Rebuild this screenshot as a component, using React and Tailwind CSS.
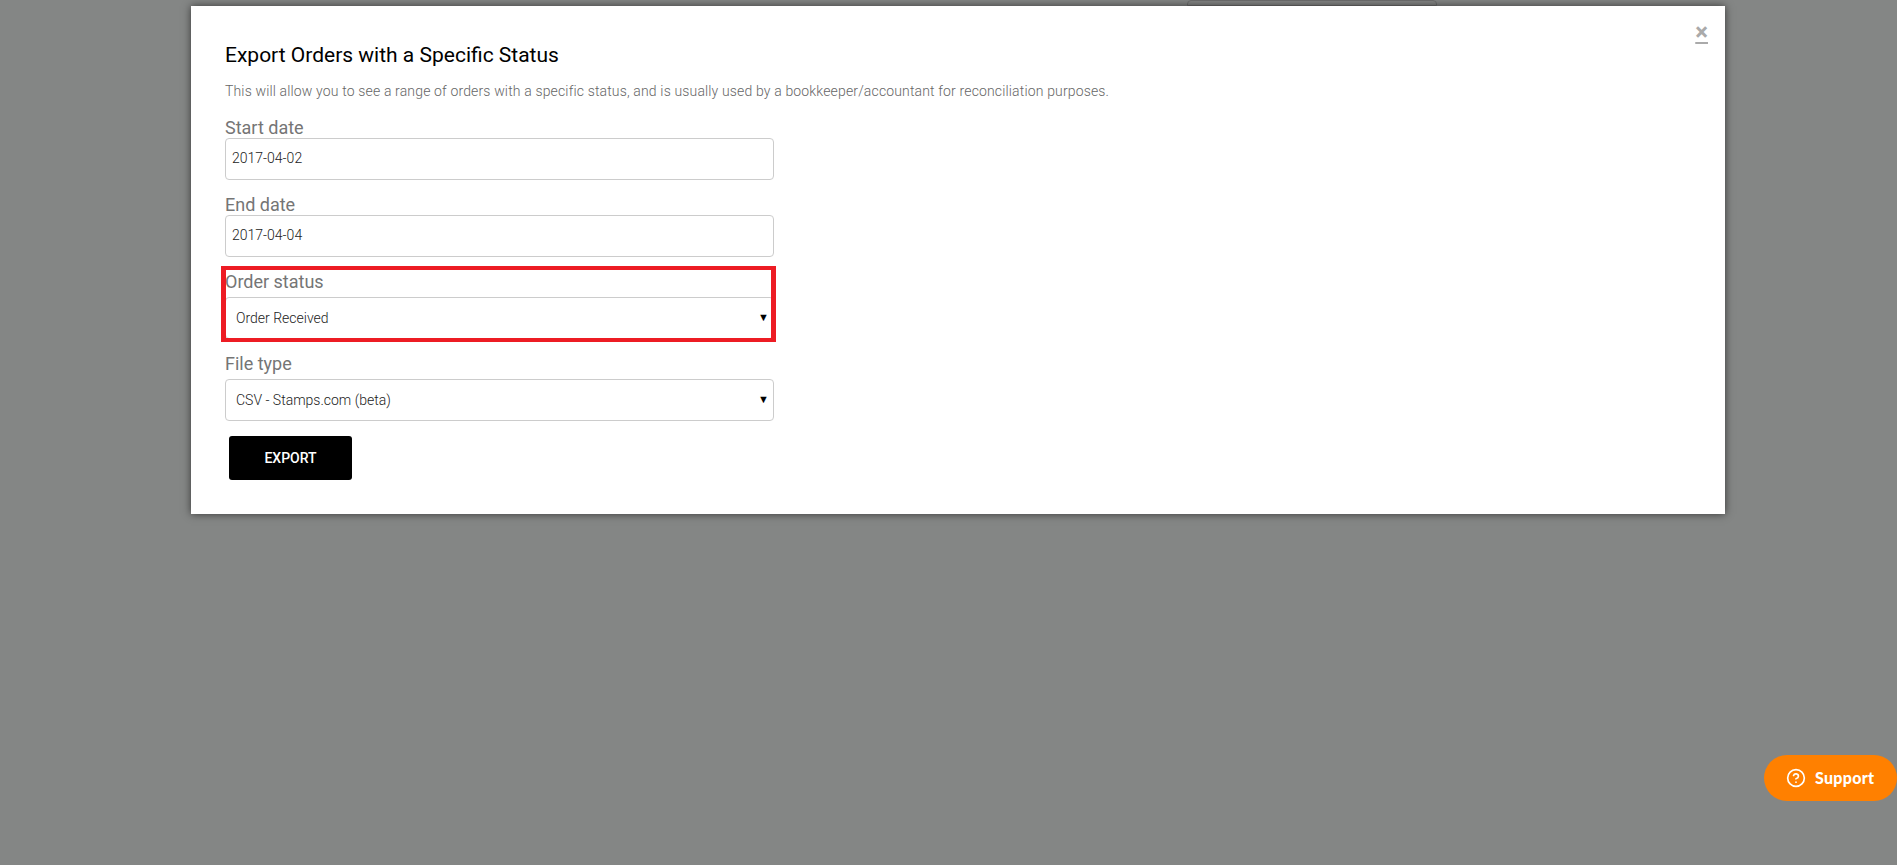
import React from 'react';
import { CircleHelp } from 'lucide-react';

function Field({ label, children, className = '', labelClass = '' }) {
  return (
    <div className={className}>
      <label className={`block text-[18px] leading-[21px] text-[#757575] ${labelClass}`}>{label}</label>
      {children}
    </div>
  );
}

function TextBox({ value }) {
  return (
    <div className="h-[42px] w-[549px] rounded-[4px] border border-[#ccc] bg-white pl-[6px] text-[14px] font-light leading-[38px] text-[#222]">
      {value}
    </div>
  );
}

function SelectBox({ value }) {
  return (
    <div className="flex h-[42px] w-[549px] items-center justify-between rounded-[4px] border border-[#ccc] bg-white pl-[10px] pr-[4px] text-[14px] font-light text-[#222]">
      <span>{value}</span>
      <span className="text-[11px] text-black">▼</span>
    </div>
  );
}

export default function App() {
  return (
    <div className="relative h-[865px] overflow-hidden bg-[#848685] pt-[6px] font-['Roboto',sans-serif]">
      {/* page behind the overlay, only a sliver shows */}
      <div className="absolute left-[1187px] top-0 h-[6px] w-[250px] rounded-t-[4px] border border-[#6e6e6e]" />

      <div className="relative ml-[191px] h-[508px] w-[1534px] bg-white pl-[34px] pt-[36px] shadow-[0_0_8px_rgba(0,0,0,0.6)]">
        <button className="absolute right-[17px] top-[14px] text-[24px] font-bold leading-[24px] text-[#aaa] underline">×</button>

        <h2 className="text-[21px] leading-[26px] text-black">Export Orders with a Specific Status</h2>
        <p className="mt-[14px] text-[14px] font-light leading-[18px] tracking-[0.15px] text-[#666]">
          This will allow you to see a range of orders with a specific status, and is usually used by a bookkeeper/accountant for reconciliation purposes.
        </p>

        <Field label="Start date" className="mt-[17px]">
          <TextBox value="2017-04-02" />
        </Field>
        <Field label="End date" className="mt-[14px]">
          <TextBox value="2017-04-04" />
        </Field>

        <Field label="Order status" labelClass="mb-[5px]" className="relative mt-[14px]">
          <SelectBox value="Order Received" />
          <div className="absolute -left-[4px] -top-[5px] h-[76px] w-[555px] border-x-[5px] border-y-4 border-[#ed1c24]" />
        </Field>

        <Field label="File type" labelClass="mb-[5px]" className="mt-[14px]">
          <SelectBox value="CSV - Stamps.com (beta)" />
        </Field>

        <button className="ml-[4px] mt-[15px] h-[44px] w-[123px] rounded-[3px] bg-black text-[14px] font-medium text-white">
          EXPORT
        </button>
      </div>

      <button className="absolute right-0 top-[755px] flex h-[46px] w-[133px] items-center gap-[9px] rounded-l-[23px] rounded-r-[23px] bg-[#ff8000] pl-[22px] font-['Lato',sans-serif] text-[16px] font-black tracking-[0.3px] text-white">
        <CircleHelp className="h-[20px] w-[20px]" strokeWidth={2} />
        Support
      </button>
    </div>
  );
}
